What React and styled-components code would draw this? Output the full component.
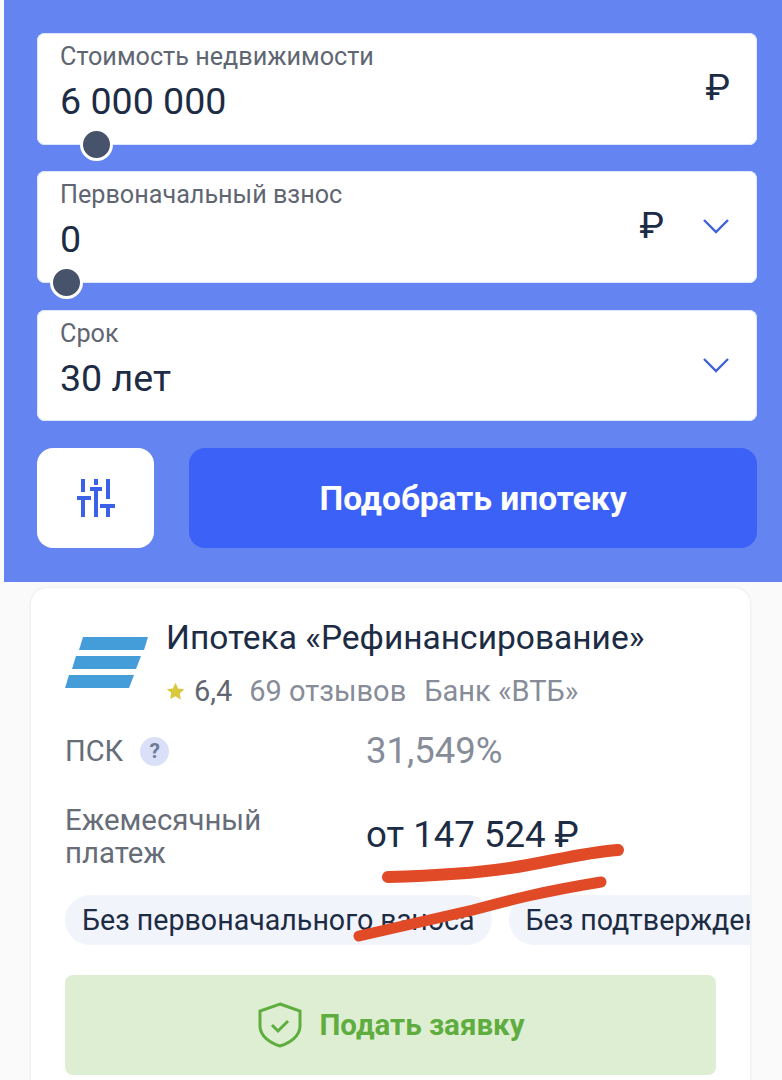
import React from 'react';
import styled, { createGlobalStyle } from 'styled-components';

const GlobalStyle = createGlobalStyle`
  html, body {
    margin: 0;
    padding: 0;
    background: #fbfbfc;
    font-family: Roboto, "Liberation Sans", sans-serif;
  }
`;

const Page = styled.div`
  position: relative;
  width: 782px;
  height: 1080px;
  overflow: hidden;
  background: #fafafb;
`;

const SearchPanel = styled.div`
  box-sizing: border-box;
  margin-left: 4px;
  width: 778px;
  height: 582px;
  padding: 33px 25px 0 33px;
  background: #6484f2;
  display: flex;
  flex-direction: column;
  gap: 26.8px;
`;

const Field = styled.div`
  position: relative;
  box-sizing: border-box;
  height: 111.6px;
  padding: 8px 23px 0;
  background: #fff;
  border-radius: 8px;
  box-shadow: 0 0 0 1px #dfe6fc inset;
  display: flex;
  justify-content: space-between;
`;

const FieldText = styled.div`
  display: flex;
  flex-direction: column;
`;

const FieldLabel = styled.div`
  font-size: 25.2px;
  line-height: 32px;
  color: #5f6672;
`;

const FieldValue = styled.div`
  margin-top: 6px;
  font-size: 37.6px;
  line-height: 44px;
  color: #1d2c45;
`;

const FieldIcons = styled.div`
  display: flex;
  align-items: center;
  gap: 38px;
  height: 94px;
  padding-right: 4px;
`;

const Rouble = styled.span`
  font-size: 37px;
  line-height: 40px;
  color: #1d2c45;
`;

const Thumb = styled.div`
  position: absolute;
  left: ${p => p.$left}px;
  top: 95px;
  width: 27px;
  height: 27px;
  box-sizing: content-box;
  border: 3px solid #fff;
  border-radius: 50%;
  background: #46536b;
`;

const Actions = styled.div`
  display: flex;
  gap: 35px;
`;

const FilterButton = styled.div`
  width: 117px;
  height: 100px;
  background: #fff;
  border-radius: 16px;
  display: flex;
  align-items: center;
  justify-content: center;
`;

const PickButton = styled.div`
  flex: 1;
  height: 100px;
  background: #3b61f6;
  border-radius: 16px;
  color: #fff;
  font-size: 33.5px;
  font-weight: 700;
  display: flex;
  align-items: center;
  justify-content: center;
`;

const Card = styled.div`
  box-sizing: border-box;
  margin: 6px 0 0 31px;
  width: 719px;
  height: 520px;
  padding: 32px 0 0 34px;
  background: #fff;
  border-radius: 16px 16px 0 0;
  box-shadow: 0 0 3px rgba(40, 50, 80, 0.12);
  overflow: hidden;
`;

const CardHead = styled.div`
  display: flex;
  gap: 18px;
`;

const Logo = styled.svg`
  margin-top: 17px;
  flex: none;
  width: 84px;
  height: 52px;
`;

const HeadText = styled.div`
  display: flex;
  flex-direction: column;
  margin-left: -1px;
`;

const Title = styled.div`
  font-size: 33.5px;
  line-height: 36px;
  color: #1d2c45;
`;

const Meta = styled.div`
  margin-top: 18px;
  display: flex;
  align-items: center;
  font-size: 29px;
  line-height: 34px;
  color: #868c98;
`;

const Star = styled.svg`
  width: 19px;
  height: 19px;
  margin-right: 9px;
`;

const Score = styled.span`
  color: #5f6672;
  margin-right: 17px;
`;

const Reviews = styled.span`
  margin-right: 18px;
`;

const InfoRow = styled.div`
  display: grid;
  grid-template-columns: 301px 1fr;
  margin-top: ${p => p.$top}px;
`;

const InfoLabel = styled.div`
  display: flex;
  align-items: center;
  gap: 17px;
  font-size: 29px;
  line-height: 33px;
  color: #666c78;
`;

const PaymentLabel = styled.div`
  font-size: 29.4px;
  line-height: 33px;
  color: #666c78;
`;

const Hint = styled.span`
  width: 29px;
  height: 29px;
  border-radius: 50%;
  background: #d9e0f8;
  color: #6f7a96;
  font-size: 21px;
  font-weight: 700;
  display: flex;
  align-items: center;
  justify-content: center;
`;

const Rate = styled.div`
  font-size: 36.5px;
  line-height: 40px;
  color: #868c98;
`;

const Payment = styled.div`
  margin-top: 9px;
  font-size: 36.6px;
  line-height: 44px;
  color: #1d2c45;
`;

const Tags = styled.div`
  margin-top: 25px;
  display: flex;
  gap: 17px;
  overflow: hidden;
`;

const Tag = styled.div`
  flex: none;
  height: 50px;
  padding: 0 17px;
  border-radius: 25px;
  background: #f2f4fb;
  color: #1d2c45;
  font-size: 28.6px;
  line-height: 50px;
  white-space: nowrap;
`;

const ApplyButton = styled.div`
  margin-top: 30px;
  width: 651px;
  height: 100px;
  border-radius: 8px;
  background: #ddeed2;
  color: #60ad3f;
  font-size: 29.5px;
  font-weight: 700;
  display: flex;
  align-items: center;
  justify-content: center;
  gap: 17px;
  padding-left: 2px;
  box-sizing: border-box;
`;

const Scribbles = styled.svg`
  position: absolute;
  left: 0;
  top: 0;
  width: 782px;
  height: 1080px;
  pointer-events: none;
`;

const Chevron = () => (
  <svg width="28" height="18" viewBox="0 0 28 18" fill="none">
    <path d="M2 3l12 12L26 3" stroke="#3f62d8" strokeWidth="2.4" />
  </svg>
);

const App = () => (
  <Page>
    <GlobalStyle />
    <SearchPanel>
      <Field>
        <FieldText>
          <FieldLabel>Стоимость недвижимости</FieldLabel>
          <FieldValue>6 000 000</FieldValue>
        </FieldText>
        <FieldIcons>
          <Rouble>₽</Rouble>
        </FieldIcons>
        <Thumb $left={43} />
      </Field>
      <Field>
        <FieldText>
          <FieldLabel>Первоначальный взнос</FieldLabel>
          <FieldValue>0</FieldValue>
        </FieldText>
        <FieldIcons>
          <Rouble>₽</Rouble>
          <Chevron />
        </FieldIcons>
        <Thumb $left={13} />
      </Field>
      <Field>
        <FieldText>
          <FieldLabel>Срок</FieldLabel>
          <FieldValue>30 лет</FieldValue>
        </FieldText>
        <FieldIcons>
          <Chevron />
        </FieldIcons>
      </Field>
      <Actions>
        <FilterButton>
          <svg width="38" height="38" viewBox="0 0 38 38" fill="#3b61e8">
            <rect x="4" y="0" width="4" height="13" />
            <rect x="0" y="17" width="14" height="4" />
            <rect x="4" y="21" width="4" height="17" />
            <rect x="17" y="0" width="4" height="6" />
            <rect x="13" y="8" width="12" height="4" />
            <rect x="17" y="12" width="4" height="26" />
            <rect x="29" y="0" width="4" height="20" />
            <rect x="23" y="25" width="15" height="4" />
            <rect x="29" y="29" width="4" height="9" />
          </svg>
        </FilterButton>
        <PickButton>Подобрать ипотеку</PickButton>
      </Actions>
    </SearchPanel>
    <Card>
      <CardHead>
        <Logo viewBox="0 0 84 52" fill="#449cd8">
          <polygon points="18,0 83,0 79,13 14,13" />
          <polygon points="11,19 76,19 71,32 7,32" />
          <polygon points="4,38 69,38 64,51 0,51" />
        </Logo>
        <HeadText>
          <Title>Ипотека «Рефинансирование»</Title>
          <Meta>
            <Star viewBox="0 0 24 24" fill="#d8c93e">
              <path d="M12 1l3.4 7.2 7.6 1-5.6 5.4 1.4 7.9L12 18l-6.8 3.5 1.4-7.9L1 9.2l7.6-1z" />
            </Star>
            <Score>6,4</Score>
            <Reviews>69 отзывов</Reviews>
            <span>Банк «ВТБ»</span>
          </Meta>
        </HeadText>
      </CardHead>
      <InfoRow $top={23}>
        <InfoLabel>
          ПСК <Hint>?</Hint>
        </InfoLabel>
        <Rate>31,549%</Rate>
      </InfoRow>
      <InfoRow $top={33}>
        <PaymentLabel>
          Ежемесячный
          <br />
          платеж
        </PaymentLabel>
        <Payment>от 147 524 ₽</Payment>
      </InfoRow>
      <Tags>
        <Tag>Без первоначального взноса</Tag>
        <Tag>Без подтверждения дохода</Tag>
      </Tags>
      <ApplyButton>
        <svg width="44" height="46" viewBox="0 0 44 46" fill="none" stroke="#60ad3f" strokeWidth="3">
          <path d="M22 2l20 7v15c0 10-10 17-20 20C12 41 2 34 2 24V9z" />
          <path d="M14 23l6 6 10-10" />
        </svg>
        Подать заявку
      </ApplyButton>
    </Card>
    <Scribbles viewBox="0 0 782 1080" fill="none" stroke="#e04a26" strokeLinecap="round">
      <path d="M388 877c42-1 82-3 122-9s70-15 108-18" strokeWidth="12" />
      <path d="M359 936l114-26c37-10 67-18 128-28" strokeWidth="11" />
    </Scribbles>
  </Page>
);

export default App;
